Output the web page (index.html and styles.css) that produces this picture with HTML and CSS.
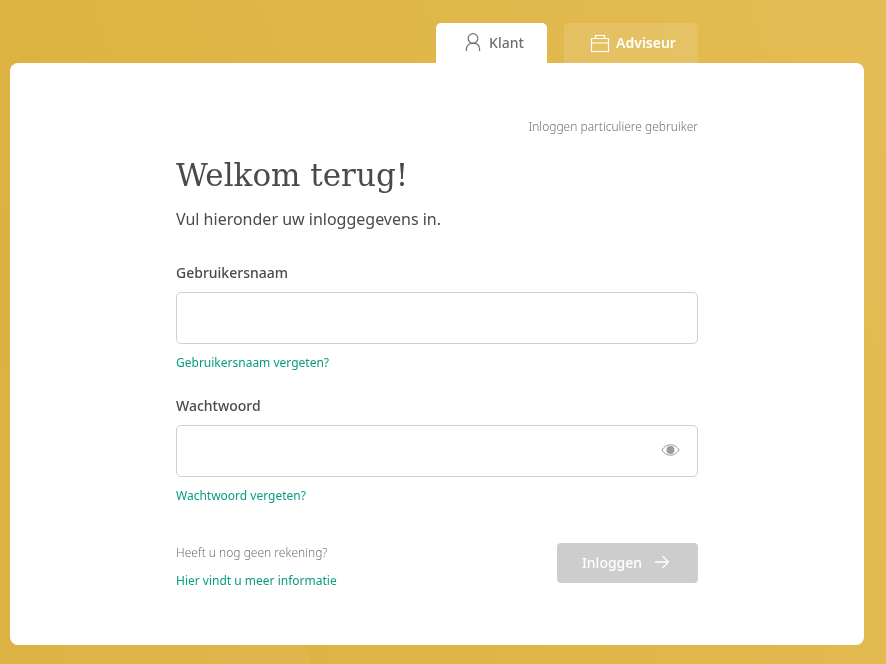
FILE: index.html
```
<!DOCTYPE html>
<html lang="nl">
<head>
    <meta charset="UTF-8">
    <meta name="viewport" content="width=device-width, initial-scale=1.0">
    <title>Inloggen</title>
    <link rel="stylesheet" href="styles.css">
</head>
<body>
    <svg class="backdrop" viewBox="0 0 886 664" preserveAspectRatio="none" aria-hidden="true">
        <defs>
            <linearGradient id="glow">
                <stop offset="0" stop-color="#ddb245"/>
                <stop offset="1" stop-color="#e0b74d"/>
            </linearGradient>
        </defs>
        <path d="M0 364 L24 374 Q240 480 312 664 H0 Z" fill="url(#glow)"/>
    </svg>
    <div class="page">
        <nav class="tabs">
            <a class="tab tab-active" href="#">
                <svg class="tab-icon" viewBox="0 0 20 20">
                    <circle cx="10" cy="6.5" r="4.8"/>
                    <path d="M3.4 19 V17.5 C3.4 13.5 6 11.2 10 11.2 S16.6 13.5 16.6 17.5 V19"/>
                </svg>
                <span>Klant</span>
            </a>
            <a class="tab tab-adviseur" href="#">
                <svg class="tab-icon" viewBox="0 0 20 20">
                    <path d="M1.5 6.5 H18.5 V19.5 H1.5 Z M5.5 6.5 V3.5 H14.5 V6.5"/>
                    <path class="band" d="M2 11 H18"/>
                </svg>
                <span>Adviseur</span>
            </a>
        </nav>
        <main class="card">
            <form class="login">
                <p class="user-type">Inloggen particuliere gebruiker</p>
                <h1 class="title">Welkom terug!</h1>
                <p class="intro">Vul hieronder uw inloggegevens in.</p>

                <div class="field">
                    <label for="username">Gebruikersnaam</label>
                    <input type="text" id="username">
                    <a class="link" href="#">Gebruikersnaam vergeten?</a>
                </div>
                <div class="field">
                    <label for="password">Wachtwoord</label>
                    <div class="password">
                        <input type="password" id="password">
                        <button class="show-password" type="button" aria-label="Toon wachtwoord">
                            <svg viewBox="0 0 18 12">
                                <path d="M0.5 6 C4.5 -1 13.5 -1 17.5 6 C13.5 13 4.5 13 0.5 6 Z"/>
                                <circle cx="9" cy="6" r="4"/>
                            </svg>
                        </button>
                    </div>
                    <a class="link" href="#">Wachtwoord vergeten?</a>
                </div>

                <div class="actions">
                    <div class="register">
                        <p>Heeft u nog geen rekening?</p>
                        <a class="link" href="#">Hier vindt u meer informatie</a>
                    </div>
                    <button class="btn" type="submit">
                        <span>Inloggen</span>
                        <svg viewBox="0 0 14 14">
                            <path d="M0 7 H13 M7.5 1 L13.3 7 L7.5 13"/>
                        </svg>
                    </button>
                </div>
            </form>
        </main>
    </div>
</body>
</html>
```
FILE: styles.css
```
* {
    box-sizing: border-box;
}
body {
    margin: 0;
    min-height: 100vh;
    font-family: "Noto Sans", sans-serif;
    font-size: 14px;
    color: #4a4a4a;
    background: linear-gradient(70deg, #dbb03d, #e4bc54);
}
p, h1 {
    margin: 0;
}
a {
    text-decoration: none;
}
.backdrop {
    position: fixed;
    top: 0;
    left: 0;
    z-index: -1;
    width: 100%;
    height: 100%;
}
.page {
    padding: 23px 22px 19px 10px;
}

/* Tabs */
.tabs {
    display: flex;
    justify-content: flex-end;
    gap: 17px;
    width: 100%;
    max-width: 522px;
    margin: 0 auto;
}
.tab {
    display: flex;
    align-items: center;
    justify-content: center;
    gap: 6px;
    height: 40px;
    width: 111px;
    padding: 0 0 2px 4px;
    border-radius: 5px 5px 0 0;
}
.tab-active {
    background-color: #fff;
    color: #6b6f73;
    font-weight: 500;
}
.tab-adviseur {
    width: 134px;
    background-color: rgba(255, 255, 255, 0.12);
    color: #fff;
    font-weight: 600;
}
.tab-icon {
    width: 20px;
    height: 20px;
    fill: none;
    stroke: currentColor;
    stroke-width: 1.2;
}
.band {
    stroke: rgba(255, 255, 255, 0.5);
    stroke-width: 2;
}

/* Card */
.card {
    padding: 54px 20px;
    background-color: #fff;
    border-radius: 8px;
}
.login {
    max-width: 522px;
    margin: 0 auto;
}
.user-type {
    text-align: right;
    font-size: 12px;
    font-weight: 300;
    line-height: 20px;
    color: #707070;
}
.title {
    margin-top: 16px;
    font-family: "DejaVu Serif", serif;
    font-size: 31px;
    font-weight: 400;
    line-height: 44px;
}
.intro {
    margin-top: 10px;
    font-size: 16px;
    line-height: 24px;
}

/* Fields */
.field {
    margin-top: 32px;
}
.field + .field {
    margin-top: 23px;
}
label {
    display: block;
    margin-bottom: 9px;
    font-weight: 500;
    line-height: 20px;
}
input {
    display: block;
    width: 100%;
    height: 52px;
    padding: 0 18px;
    border: 1px solid #d0d0d0;
    border-radius: 5px;
    background-color: #fff;
    font: inherit;
    color: inherit;
}
.password {
    position: relative;
}
.password input {
    padding-right: 50px;
}
.show-password {
    position: absolute;
    top: 0;
    right: 18px;
    height: 50px;
    padding: 0;
    border: none;
    background: none;
    cursor: pointer;
}
.show-password svg {
    display: block;
    width: 19px;
    height: 12px;
    fill: none;
    stroke: #9b9b9b;
}
.show-password circle {
    fill: #9b9b9b;
    stroke: none;
}
.link {
    display: block;
    font-size: 12px;
    line-height: 20px;
    color: #089c7f;
}
.field .link {
    margin-top: 9px;
}

/* Bottom row */
.actions {
    display: flex;
    justify-content: space-between;
    margin-top: 37px;
}
.register p {
    margin-bottom: 8px;
    font-size: 12px;
    font-weight: 300;
    line-height: 20px;
    color: #707070;
}
.btn {
    display: flex;
    align-items: center;
    justify-content: center;
    gap: 13px;
    width: 141px;
    height: 40px;
    padding: 0 4px 2px 0;
    border: none;
    border-radius: 4px;
    background-color: #cdcdcd;
    color: #fff;
    font: inherit;
    font-weight: 500;
    cursor: pointer;
}
.btn svg {
    width: 14px;
    height: 14px;
    fill: none;
    stroke: currentColor;
    stroke-width: 1.3;
}
```
